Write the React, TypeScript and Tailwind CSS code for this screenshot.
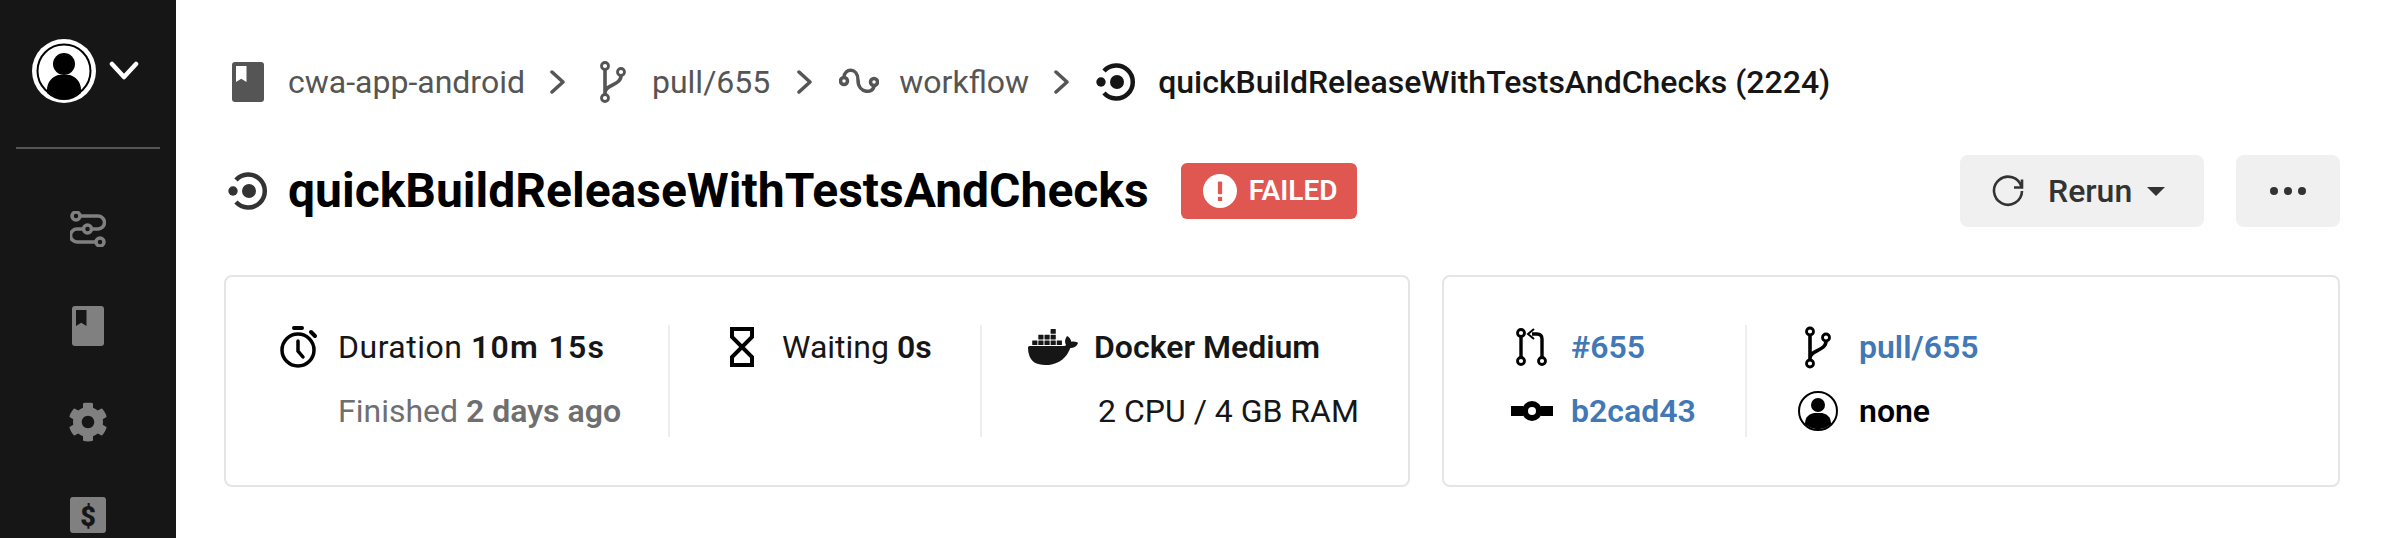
import { FaCog } from "react-icons/fa";
import { SiDocker } from "react-icons/si";
import { Fragment, type ReactNode } from "react";

function BookIcon({ className, mark }: { className?: string; mark: string }) {
  return (
    <svg viewBox="0 0 32 40" className={className}>
      <rect width="32" height="40" rx="3" fill="currentColor" />
      <path d="M4 4h10.500v16l-5.250-3.200L4 20z" fill={mark} />
    </svg>
  );
}

function WorkflowMark({ className }: { className?: string }) {
  return (
    <svg viewBox="0 0 40 38" fill="none" className={className}>
      <path d="M8 8a16.500 16.500 0 1 1 0 22" stroke="currentColor" strokeWidth="4.500" strokeLinecap="butt" />
      <circle cx="21" cy="19" r="7" fill="currentColor" />
      <circle cx="5" cy="19" r="4.700" fill="currentColor" />
    </svg>
  );
}

function BranchIcon({ className }: { className?: string }) {
  return (
    <svg viewBox="0 0 26 42" fill="none" stroke="currentColor" strokeWidth="2.800" className={className}>
      <circle cx="5" cy="5" r="3.500" />
      <circle cx="5" cy="37" r="3.500" />
      <circle cx="21" cy="11" r="3.500" />
      <path d="M5 8.500v25M21 14.500c0 10-16 9-16 17" strokeWidth="3.600" />
    </svg>
  );
}

function Chevron({ className }: { className?: string }) {
  return (
    <svg viewBox="0 0 16 24" fill="none" stroke="#555" strokeWidth="3.500" strokeLinecap="round" strokeLinejoin="round" className={className}>
      <path d="M2 2l11 10L2 22" />
    </svg>
  );
}

function Avatar({ className }: { className?: string }) {
  return (
    <svg viewBox="0 0 64 64" className={className}>
      <circle cx="32" cy="32" r="32" fill="#fff" />
      <circle cx="32" cy="32" r="26.500" fill="#fff" stroke="#000" strokeWidth="2" />
      <circle cx="32" cy="25" r="11" fill="#000" />
      <path d="M15 54c-1-12 6-16 11-18h12c5 2 12 6 11 18a24 24 0 0 1-34 0z" fill="#000" />
    </svg>
  );
}

function Sidebar() {
  return (
    <aside className="h-[538px] w-[176px] shrink-0 overflow-hidden bg-[#161616] px-[16px] pt-[39px]">
      <div className="flex items-center pl-[16px]">
        <Avatar className="h-[64px] w-[64px]" />
        <svg viewBox="0 0 30 20" fill="none" stroke="#fff" strokeWidth="4.500" strokeLinecap="round" strokeLinejoin="round" className="ml-[13px] h-[20px] w-[30px]">
          <path d="M3 3l12 13L27 3" />
        </svg>
      </div>
      <div className="mt-[44px] h-[2px] bg-[#555]" />
      <div className="mt-[62px] flex flex-col items-center text-[#808080]">
        <svg viewBox="0 0 36 36" fill="none" stroke="currentColor" strokeWidth="3.500" className="h-[36px] w-[36px]">
          <circle cx="6" cy="5" r="4" />
          <circle cx="17.500" cy="18" r="4" />
          <circle cx="30" cy="31" r="4" />
          <path d="M10 5h18a6.500 6.500 0 0 1 0 13h-7M13.500 18H7a6.500 6.500 0 0 0 0 13h19" />
        </svg>
        <BookIcon mark="#161616" className="mt-[59px] h-[40px] w-[32px]" />
        <FaCog className="mt-[56px] h-[40px] w-[40px]" />
        <svg viewBox="0 0 36 36" className="mt-[55px] h-[36px] w-[36px]">
          <rect width="36" height="36" rx="3" fill="currentColor" />
          <text x="18" y="29" textAnchor="middle" fontFamily="Roboto" fontWeight="900" fontSize="27" fill="#161616">$</text>
        </svg>
      </div>
    </aside>
  );
}

function Breadcrumb() {
  return (
    <nav className="flex h-[40px] items-center pl-[8px] text-[32px] text-[#555]">
      <BookIcon mark="#fff" className="h-[40px] w-[32px] text-[#555]" />
      <span className="ml-[24px]">cwa-app-android</span>
      <Chevron className="ml-[25px] h-[24px] w-[16px] shrink-0" />
      <BranchIcon className="ml-[34px] h-[42px] w-[26px]" />
      <span className="ml-[26px]">pull/655</span>
      <Chevron className="ml-[27px] h-[24px] w-[16px] shrink-0" />
      <svg viewBox="0 0 40 28" fill="none" stroke="currentColor" strokeWidth="3.500" className="ml-[26px] h-[28px] w-[40px]">
        <circle cx="5" cy="13" r="3.500" />
        <circle cx="35" cy="14" r="3.500" />
        <path d="M5 9.500C5 0 19 -1 19 12c0 14 16 14 16 5.500" />
      </svg>
      <span className="ml-[20px]">workflow</span>
      <Chevron className="ml-[25px] h-[24px] w-[16px] shrink-0" />
      <WorkflowMark className="ml-[26px] h-[38px] w-[40px] text-[#161616]" />
      <span className="ml-[22px] font-medium text-[#161616]">quickBuildReleaseWithTestsAndChecks (2224)</span>
    </nav>
  );
}

function TitleRow() {
  return (
    <div className="mt-[53px] flex h-[72px] items-center justify-between">
      <div className="flex items-center pl-[4px]">
        <WorkflowMark className="h-[38px] w-[40px] text-[#333]" />
        <h1 className="ml-[20px] text-[48px] font-bold text-black">quickBuildReleaseWithTestsAndChecks</h1>
        <span className="ml-[32px] flex h-[56px] w-[176px] items-center rounded-[6px] bg-[#e05650] pl-[22px] text-[28px] font-semibold text-white">
          <svg viewBox="0 0 32 32" className="mr-[12px] h-[34px] w-[34px]">
            <circle cx="16" cy="16" r="16" fill="#fff" />
            <rect x="14" y="7" width="4" height="12" rx="1" fill="#e05650" />
            <rect x="14" y="21.500" width="4" height="4" fill="#e05650" />
          </svg>
          FAILED
        </span>
      </div>
      <div className="flex gap-[32px]">
        <button className="flex h-[72px] w-[244px] items-center rounded-[8px] bg-[#f0f0f0] pl-[32px] text-[32px] font-medium text-[#333]">
          <svg viewBox="0 0 32 32" fill="none" stroke="currentColor" strokeWidth="2.600" className="h-[32px] w-[32px]">
            <path d="M29.500 12A14 14 0 1 0 30 16" />
            <path d="M22 12.500h8V4.500" strokeLinejoin="miter" />
          </svg>
          <span className="ml-[24px]">Rerun</span>
          <span className="ml-[15px] h-0 w-0 border-x-[9px] border-t-[9px] border-x-transparent border-t-[#333]" />
        </button>
        <button className="flex h-[72px] w-[104px] items-center justify-center gap-[6px] rounded-[8px] bg-[#f0f0f0]">
          {[0, 1, 2].map((i) => (
            <span key={i} className="h-[8px] w-[8px] rounded-full bg-[#333]" />
          ))}
        </button>
      </div>
    </div>
  );
}

function Row({ icon, children }: { icon: ReactNode; children: ReactNode }) {
  return (
    <Fragment>
      <div className="flex h-[44px] items-center justify-center">{icon}</div>
      <div className="flex h-[44px] items-center whitespace-pre">{children}</div>
    </Fragment>
  );
}

function DetailsCards() {
  return (
    <div className="mt-[48px] flex gap-[32px] text-[32px] text-[#161616]">
      <section className="flex h-[212px] w-[1186px] rounded-[8px] border-2 border-[#e5e5e5] py-[48px]">
        <div className="grid w-[444px] grid-cols-[38px_auto] content-start gap-x-[20px] gap-y-[20px] border-r-2 border-[#eee] pl-[54px]">
          <Row
            icon={
              <svg viewBox="0 0 38 42" fill="none" stroke="#000" strokeWidth="3.500" className="h-[42px] w-[38px]">
                <circle cx="18" cy="24" r="16" />
                <path d="M18 15v10l5 6" strokeLinecap="round" />
                <path d="M14 2h8M31 6l4 4" strokeLinecap="round" strokeWidth="4" />
              </svg>
            }
          >
            <span className="tracking-[0.5px]">Duration </span>
            <b className="font-semibold tracking-[1.300px]">10m 15s</b>
          </Row>
          <div />
          <div className="flex h-[44px] items-center whitespace-pre text-[#6f6f6f]">
            Finished <b className="font-semibold">2 days ago</b>
          </div>
        </div>
        <div className="grid w-[312px] grid-cols-[24px_auto] content-start gap-x-[28px] gap-y-[20px] border-r-2 border-[#eee] pl-[60px]">
          <Row
            icon={
              <svg viewBox="0 0 24 40" fill="none" stroke="#000" strokeWidth="4" className="h-[40px] w-[24px]">
                <path d="M0 2h24M0 38h24M2 2v8l20 20v8M22 2v8L2 30v8" />
              </svg>
            }
          >
            Waiting <b className="font-semibold">0s</b>
          </Row>
        </div>
        <div className="grid flex-1 grid-cols-[50px_auto] content-start justify-start gap-x-[16px] gap-y-[20px] pl-[46px]">
          <Row icon={<SiDocker className="h-[50px] w-[50px] text-[#161616]" />}>
            <b className="font-semibold">Docker Medium</b>
          </Row>
          <div />
          <div className="flex h-[44px] items-center pl-[4px]">2 CPU / 4 GB RAM</div>
        </div>
      </section>
      <section className="flex h-[212px] flex-1 rounded-[8px] border-2 border-[#e5e5e5] py-[48px] font-semibold">
        <div className="grid w-[303px] grid-cols-[42px_auto] content-start gap-x-[18px] gap-y-[20px] border-r-2 border-[#eee] pl-[67px]">
          <Row
            icon={
              <svg viewBox="0 0 32 38" fill="none" stroke="#000" strokeWidth="2.800" className="h-[38px] w-[32px]">
                <circle cx="5" cy="5" r="3.500" />
                <circle cx="5" cy="33" r="3.500" />
                <circle cx="26" cy="33" r="3.500" />
                <path d="M5 8.500v21M26 29.500V11q0-5-5-5h-5" strokeWidth="3.400" />
                <path d="M18 1l-6 5 6 5" strokeWidth="2" />
              </svg>
            }
          >
            <a className="text-[#4178b5]">#655</a>
          </Row>
          <Row
            icon={
              <svg viewBox="0 0 42 20" className="h-[20px] w-[42px]" fill="none" stroke="#000">
                <path d="M0 10h12M30 10h12" strokeWidth="10" />
                <circle cx="21" cy="10" r="7" fill="#fff" strokeWidth="6" />
              </svg>
            }
          >
            <a className="text-[#4178b5]">b2cad43</a>
          </Row>
        </div>
        <div className="grid flex-1 grid-cols-[40px_auto] content-start gap-x-[21px] gap-y-[20px] pl-[51px]">
          <Row icon={<BranchIcon className="h-[43px] w-[26px] text-black" />}>
            <a className="text-[#4178b5]">pull/655</a>
          </Row>
          <Row
            icon={
              <svg viewBox="0 0 40 40" className="h-[40px] w-[40px]">
                <circle cx="20" cy="20" r="19" fill="#fff" stroke="#000" strokeWidth="2" />
                <circle cx="20" cy="14" r="7" fill="#000" />
                <path d="M7 33c0-8 5-10 9-11h8c4 1 9 3 9 11a19 19 0 0 1-26 0z" fill="#000" />
              </svg>
            }
          >
            <span className="text-black">none</span>
          </Row>
        </div>
      </section>
    </div>
  );
}

export default function App() {
  return (
    <div className="flex h-[538px] overflow-hidden bg-white font-['Roboto',sans-serif]">
      <Sidebar />
      <main className="flex-1 px-[48px] pt-[62px]">
        <Breadcrumb />
        <TitleRow />
        <DetailsCards />
      </main>
    </div>
  );
}
